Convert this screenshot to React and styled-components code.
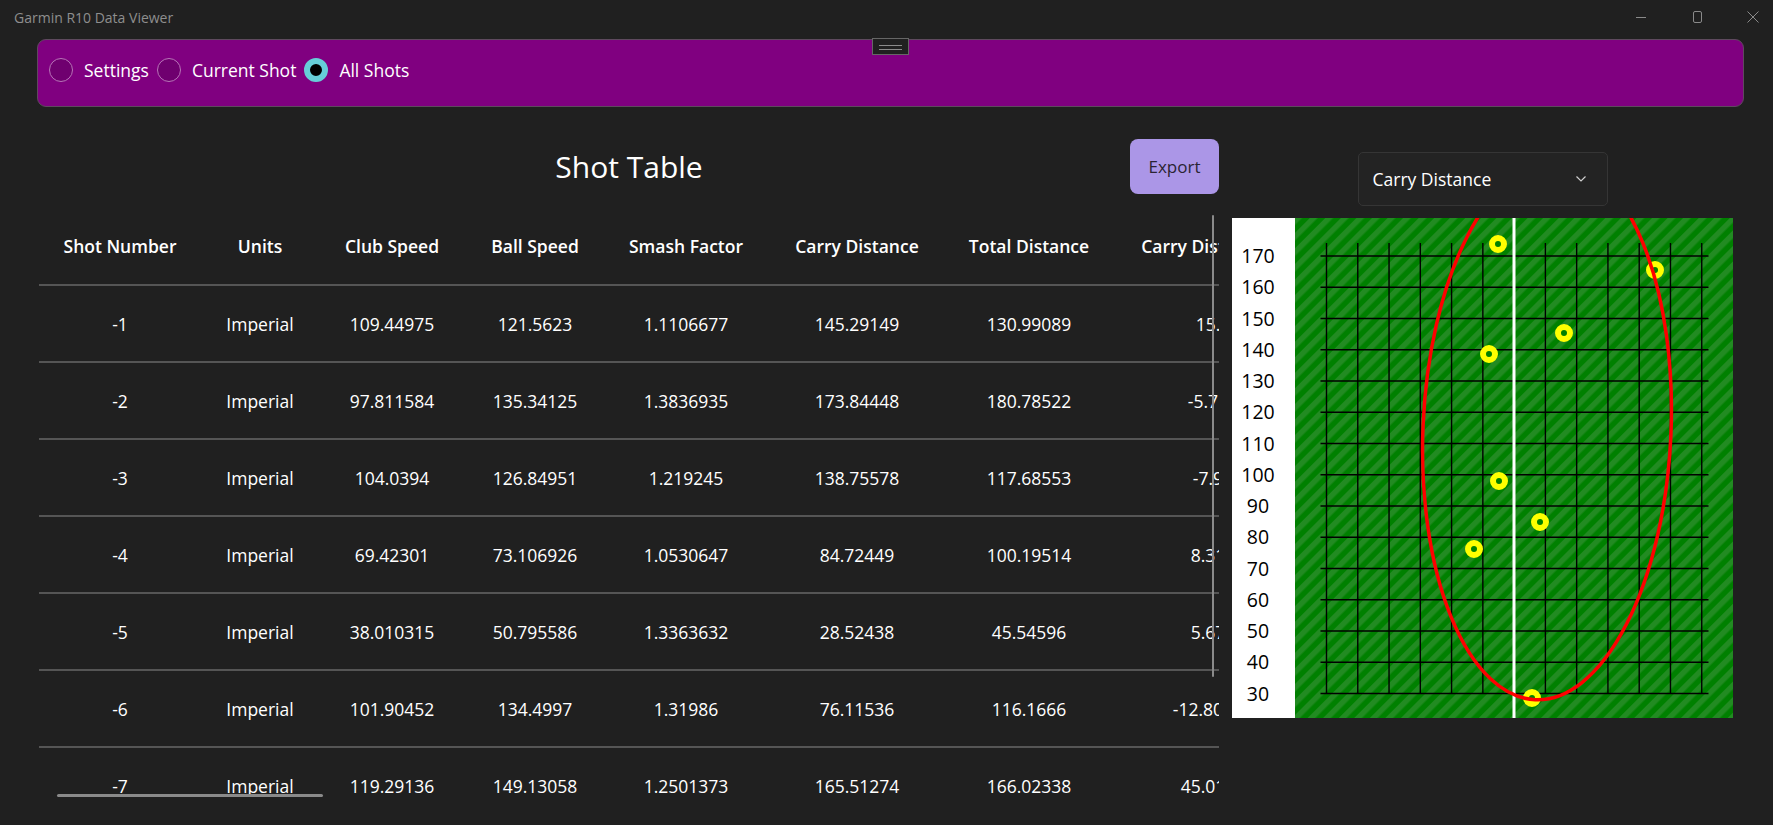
import React from "react";
import styled, { createGlobalStyle } from "styled-components";

const GlobalStyle = createGlobalStyle`
  html, body {
    margin: 0;
    padding: 0;
    background: #202020;
  }
  body {
    font-family: "Open Sans", "Noto Sans", sans-serif;
    color: #ffffff;
  }
`;

const columns = [
  "Shot Number",
  "Units",
  "Club Speed",
  "Ball Speed",
  "Smash Factor",
  "Carry Distance",
  "Total Distance",
  "Carry Distance Side",
];

const shots = [
  ["-1", "Imperial", "109.44975", "121.5623", "1.1106677", "145.29149", "130.99089", "15.328"],
  ["-2", "Imperial", "97.811584", "135.34125", "1.3836935", "173.84448", "180.78522", "-5.71204"],
  ["-3", "Imperial", "104.0394", "126.84951", "1.219245", "138.75578", "117.68553", "-7.9153"],
  ["-4", "Imperial", "69.42301", "73.106926", "1.0530647", "84.72449", "100.19514", "8.31427"],
  ["-5", "Imperial", "38.010315", "50.795586", "1.3363632", "28.52438", "45.54596", "5.67213"],
  ["-6", "Imperial", "101.90452", "134.4997", "1.31986", "76.11536", "116.1666", "-12.8056173"],
  ["-7", "Imperial", "119.29136", "149.13058", "1.2501373", "165.51274", "166.02338", "45.019381"],
];

// chart points, in svg units
const dots = [
  [266, 26], [423, 52], [332, 115], [257, 136],
  [267, 263], [308, 304], [242, 331], [300, 480],
];

function App() {
  return (
    <>
      <GlobalStyle />
      <Window>
        <TitleBar>
          <AppTitle>Garmin R10 Data Viewer</AppTitle>
          <Controls>
            <svg width="12" height="12" viewBox="0 0 12 12">
              <line x1="1" y1="6.5" x2="11" y2="6.5" stroke="#8a8a8a" strokeWidth="1" />
            </svg>
            <svg width="12" height="12" viewBox="0 0 12 12">
              <rect x="2.5" y="0.5" width="8" height="11" rx="1.5" fill="none" stroke="#8a8a8a" strokeWidth="1" />
            </svg>
            <svg width="12" height="12" viewBox="0 0 12 12">
              <path d="M0.5 0.5 L11.5 11.5 M11.5 0.5 L0.5 11.5" stroke="#8a8a8a" strokeWidth="1" />
            </svg>
          </Controls>
        </TitleBar>

        <NavBar>
          <DragHandle />
          <RadioItem>
            <Radio />
            <RadioLabel>Settings</RadioLabel>
          </RadioItem>
          <RadioItem>
            <Radio />
            <RadioLabel>Current Shot</RadioLabel>
          </RadioItem>
          <RadioItem>
            <Radio checked />
            <RadioLabel>All Shots</RadioLabel>
          </RadioItem>
        </NavBar>

        <Main>
          <LeftPanel>
            <TitleRow>
              <span />
              <PanelTitle>Shot Table</PanelTitle>
              <ExportButton>Export</ExportButton>
            </TitleRow>
            <Table>
              <HeaderRow>
                {columns.map((c) => (
                  <HeadCell key={c}>{c}</HeadCell>
                ))}
              </HeaderRow>
              {shots.map((row) => (
                <DataRow key={row[0]}>
                  {row.map((v, i) => (
                    <Cell key={i}>{v}</Cell>
                  ))}
                </DataRow>
              ))}
            </Table>
            <VScroll />
            <HScroll />
          </LeftPanel>

          <RightPanel>
            <Dropdown>
              <span>Carry Distance</span>
              <svg width="12" height="8" viewBox="0 0 12 8">
                <polyline points="1.5,1.5 6,6 10.5,1.5" fill="none" stroke="#cfcfcf" strokeWidth="1.2" />
              </svg>
            </Dropdown>
            <Chart />
          </RightPanel>
        </Main>
      </Window>
    </>
  );
}

function Chart() {
  const hLines = Array.from({ length: 15 }, (_, i) => 38 + i * 31.25);
  const vLines = Array.from({ length: 13 }, (_, j) => 94.5 + j * 31.27);
  return (
    <ChartSvg width="501" height="500" viewBox="0 0 501 500">
      <defs>
        <pattern id="stripes" width="11" height="11" patternUnits="userSpaceOnUse" patternTransform="rotate(45)">
          <rect width="11" height="11" fill="#008000" />
          <rect width="5.5" height="11" fill="#228b22" />
        </pattern>
        <clipPath id="field">
          <rect x="63" y="0" width="438" height="500" />
        </clipPath>
      </defs>
      <rect x="0" y="0" width="63" height="500" fill="#ffffff" />
      <rect x="63" y="0" width="438" height="500" fill="url(#stripes)" />
      {hLines.map((y, i) => (
        <g key={y}>
          <line x1="88.5" y1={y} x2="476.5" y2={y} stroke="#000" strokeWidth="1.6" />
          <AxisLabel x="26" y={y + 7}>{170 - i * 10}</AxisLabel>
        </g>
      ))}
      {vLines.map((x, j) =>
        j === 6 ? null : (
          <line key={x} x1={x} y1="25" x2={x} y2="476" stroke="#000" strokeWidth="1.4" />
        )
      )}
      <line x1="282" y1="0" x2="282" y2="500" stroke="#fff" strokeWidth="3" />
      {dots.map(([x, y]) => (
        <circle key={x + "-" + y} cx={x} cy={y} r="6" fill="#008000" stroke="#ffff00" strokeWidth="6" />
      ))}
      <g clipPath="url(#field)">
        <ellipse cx="315" cy="212" rx="124" ry="270" fill="none" stroke="#ff0000" strokeWidth="3.5" transform="rotate(2.5 315 212)" />
      </g>
    </ChartSvg>
  );
}

export default App;

const Window = styled.div`
  width: 1773px;
  height: 825px;
  background: #202020;
  display: flex;
  flex-direction: column;
  overflow: hidden;
`;

const TitleBar = styled.div`
  height: 39px;
  display: flex;
  align-items: center;
  justify-content: space-between;
  padding-left: 14px;
  box-sizing: border-box;
`;

const AppTitle = styled.div`
  font-size: 14px;
  color: #8e8e8e;
  margin-top: -4px;
`;

const Controls = styled.div`
  display: flex;
  align-items: center;
  gap: 44px;
  padding-right: 14px;
  margin-top: -6px;
`;

const NavBar = styled.div`
  position: relative;
  height: 68px;
  margin: 0 29px 0 37px;
  box-sizing: border-box;
  background: #800080;
  border: 1px solid #5e4a5e;
  border-radius: 9px;
  display: flex;
  align-items: flex-start;
  padding: 18px 11px 0;
  gap: 8px;
`;

const DragHandle = styled.div`
  position: absolute;
  left: 834px;
  top: -2px;
  width: 37px;
  height: 17px;
  box-sizing: border-box;
  background: #202020;
  border: 1px solid #666;
  &::after {
    content: "";
    position: absolute;
    left: 6px;
    right: 6px;
    top: 6px;
    height: 3px;
    border-top: 1px solid #8a8a8a;
    border-bottom: 1px solid #8a8a8a;
  }
`;

const RadioItem = styled.label`
  display: flex;
  align-items: center;
  gap: 11px;
  height: 24px;
`;

const Radio = styled.span`
  width: 24px;
  height: 24px;
  box-sizing: border-box;
  border-radius: 50%;
  border: ${(p) => (p.checked ? "6px solid #66ced8" : "1.5px solid #b874b8")};
  background: ${(p) => (p.checked ? "#000" : "#6f006f")};
`;

const RadioLabel = styled.span`
  font-size: 17.5px;
  color: #fff;
`;

const Main = styled.div`
  display: flex;
  gap: 13px;
  padding-left: 39px;
  margin-top: 32px;
  flex: 1;
  min-height: 0;
`;

const LeftPanel = styled.div`
  position: relative;
  width: 1180px;
  overflow: hidden;
`;

const TitleRow = styled.div`
  display: grid;
  grid-template-columns: 1fr auto 1fr;
  align-items: center;
  height: 55px;
`;

const PanelTitle = styled.h2`
  margin: 0;
  font-size: 30px;
  font-weight: 400;
  color: #fff;
`;

const ExportButton = styled.button`
  justify-self: end;
  width: 89px;
  height: 55px;
  border: none;
  border-radius: 8px;
  background: #ab96e7;
  color: #2a2433;
  font-family: "Open Sans", "Noto Sans", sans-serif;
  font-size: 17px;
`;

const Table = styled.div`
  margin-top: 14px;
  width: 1296px;
`;

const gridCols = "162px 118px 146px 140px 162px 180px 164px 224px";

const HeaderRow = styled.div`
  display: grid;
  grid-template-columns: ${gridCols};
  height: 76px;
  align-items: center;
`;

const HeadCell = styled.div`
  text-align: center;
  font-size: 17.5px;
  font-weight: 600;
  white-space: nowrap;
  color: #fff;
`;

const DataRow = styled.div`
  display: grid;
  grid-template-columns: ${gridCols};
  height: 77px;
  box-sizing: border-box;
  border-top: 2px solid #555555;
  align-items: center;
`;

const Cell = styled.div`
  text-align: center;
  font-size: 17.5px;
  white-space: nowrap;
  color: #fff;
`;

const VScroll = styled.div`
  position: absolute;
  right: 5px;
  top: 76px;
  width: 2px;
  height: 462px;
  background: #8a8a8a;
  border-radius: 1px;
`;

const HScroll = styled.div`
  position: absolute;
  left: 18px;
  top: 655px;
  width: 266px;
  height: 3px;
  background: #8a8a8a;
  border-radius: 2px;
`;

const RightPanel = styled.div`
  width: 501px;
  display: flex;
  flex-direction: column;
  align-items: center;
  padding-top: 13px;
`;

const Dropdown = styled.div`
  width: 250px;
  height: 54px;
  box-sizing: border-box;
  border: 1px solid #353535;
  border-radius: 5px;
  background: #232323;
  display: flex;
  align-items: center;
  justify-content: space-between;
  padding: 0 20px 0 14px;
  font-size: 17.5px;
  color: #fff;
  margin-bottom: 12px;
`;

const ChartSvg = styled.svg`
  display: block;
`;

const AxisLabel = styled.text`
  font-family: "Open Sans", "Noto Sans", sans-serif;
  font-size: 19.5px;
  fill: #000;
  text-anchor: middle;
`;
